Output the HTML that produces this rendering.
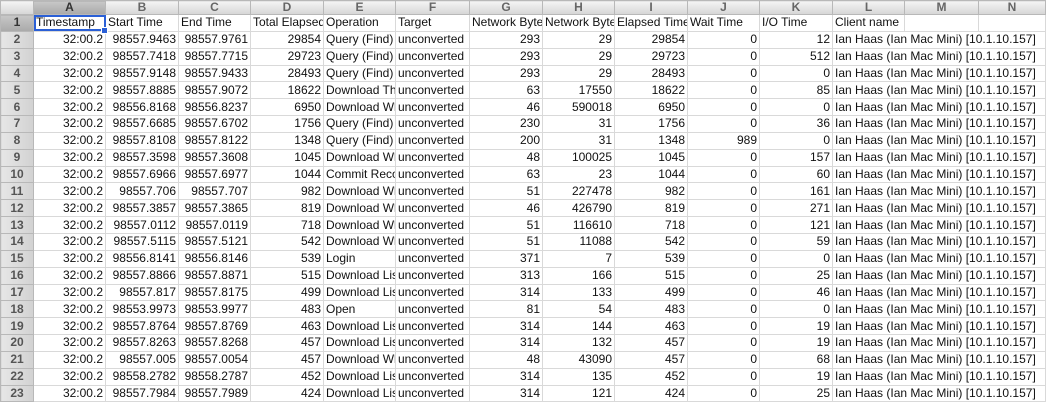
<!DOCTYPE html>
<html><head><meta charset="utf-8"><style>
html,body{margin:0;padding:0;background:#fff;width:1046px;height:404px;overflow:hidden}
table{border-collapse:collapse;table-layout:fixed;width:1045px;font-family:"Liberation Sans",sans-serif;font-size:12px;color:#111}
td{border:1px solid #d9d9d9;height:15.85px;padding:0 2px;white-space:nowrap;overflow:hidden;line-height:15px}
td.r{text-align:right}
tr.h td{background:linear-gradient(#f4f4f4,#d6d6d6);height:13px;line-height:13px;text-align:center;color:#666;font-weight:bold;font-size:12px;border-color:#b8b8b8}
td.rh{background:linear-gradient(90deg,#e6e6e6,#d2d2d2);text-align:center;color:#555;font-weight:bold;border-color:#b8b8b8;padding:0}
tr.h td.sel,td.rh.sel{background:linear-gradient(#c8c8c8,#a9a9a9);color:#333}
td.a1{outline:2px solid #2a5fd6;outline-offset:-2px;position:relative;overflow:visible}
td.a1:after{content:"";position:absolute;right:-3px;bottom:-3px;width:5px;height:5px;background:#2a5fd6;border:1px solid #fff}
</style></head><body>
<table>
<colgroup><col style="width:33px"><col style="width:72px"><col style="width:73px"><col style="width:72px"><col style="width:73px"><col style="width:72px"><col style="width:74px"><col style="width:73px"><col style="width:72px"><col style="width:73px"><col style="width:72px"><col style="width:73px"><col style="width:72px"><col style="width:74px"><col style="width:67px"></colgroup>
<tr class="h"><td style="background:linear-gradient(#f4f4f4,#d6d6d6)"></td><td class="sel">A</td><td>B</td><td>C</td><td>D</td><td>E</td><td>F</td><td>G</td><td>H</td><td>I</td><td>J</td><td>K</td><td>L</td><td>M</td><td>N</td></tr>
<tr><td class="rh sel">1</td><td class="a1">Timestamp</td><td>Start Time</td><td>End Time</td><td>Total Elapsed</td><td>Operation</td><td>Target</td><td>Network Bytes</td><td>Network Bytes</td><td>Elapsed Time</td><td>Wait Time</td><td>I/O Time</td><td>Client name</td><td></td><td></td></tr>
<tr><td class="rh">2</td><td class="r">32:00.2</td><td class="r">98557.9463</td><td class="r">98557.9761</td><td class="r">29854</td><td>Query (Find)</td><td>unconverted</td><td class="r">293</td><td class="r">29</td><td class="r">29854</td><td class="r">0</td><td class="r">12</td><td colspan="3">Ian Haas (Ian Mac Mini) [10.1.10.157]</td></tr>
<tr><td class="rh">3</td><td class="r">32:00.2</td><td class="r">98557.7418</td><td class="r">98557.7715</td><td class="r">29723</td><td>Query (Find)</td><td>unconverted</td><td class="r">293</td><td class="r">29</td><td class="r">29723</td><td class="r">0</td><td class="r">512</td><td colspan="3">Ian Haas (Ian Mac Mini) [10.1.10.157]</td></tr>
<tr><td class="rh">4</td><td class="r">32:00.2</td><td class="r">98557.9148</td><td class="r">98557.9433</td><td class="r">28493</td><td>Query (Find)</td><td>unconverted</td><td class="r">293</td><td class="r">29</td><td class="r">28493</td><td class="r">0</td><td class="r">0</td><td colspan="3">Ian Haas (Ian Mac Mini) [10.1.10.157]</td></tr>
<tr><td class="rh">5</td><td class="r">32:00.2</td><td class="r">98557.8885</td><td class="r">98557.9072</td><td class="r">18622</td><td>Download Thumbnail</td><td>unconverted</td><td class="r">63</td><td class="r">17550</td><td class="r">18622</td><td class="r">0</td><td class="r">85</td><td colspan="3">Ian Haas (Ian Mac Mini) [10.1.10.157]</td></tr>
<tr><td class="rh">6</td><td class="r">32:00.2</td><td class="r">98556.8168</td><td class="r">98556.8237</td><td class="r">6950</td><td>Download Whole</td><td>unconverted</td><td class="r">46</td><td class="r">590018</td><td class="r">6950</td><td class="r">0</td><td class="r">0</td><td colspan="3">Ian Haas (Ian Mac Mini) [10.1.10.157]</td></tr>
<tr><td class="rh">7</td><td class="r">32:00.2</td><td class="r">98557.6685</td><td class="r">98557.6702</td><td class="r">1756</td><td>Query (Find)</td><td>unconverted</td><td class="r">230</td><td class="r">31</td><td class="r">1756</td><td class="r">0</td><td class="r">36</td><td colspan="3">Ian Haas (Ian Mac Mini) [10.1.10.157]</td></tr>
<tr><td class="rh">8</td><td class="r">32:00.2</td><td class="r">98557.8108</td><td class="r">98557.8122</td><td class="r">1348</td><td>Query (Find)</td><td>unconverted</td><td class="r">200</td><td class="r">31</td><td class="r">1348</td><td class="r">989</td><td class="r">0</td><td colspan="3">Ian Haas (Ian Mac Mini) [10.1.10.157]</td></tr>
<tr><td class="rh">9</td><td class="r">32:00.2</td><td class="r">98557.3598</td><td class="r">98557.3608</td><td class="r">1045</td><td>Download Whole</td><td>unconverted</td><td class="r">48</td><td class="r">100025</td><td class="r">1045</td><td class="r">0</td><td class="r">157</td><td colspan="3">Ian Haas (Ian Mac Mini) [10.1.10.157]</td></tr>
<tr><td class="rh">10</td><td class="r">32:00.2</td><td class="r">98557.6966</td><td class="r">98557.6977</td><td class="r">1044</td><td>Commit Records</td><td>unconverted</td><td class="r">63</td><td class="r">23</td><td class="r">1044</td><td class="r">0</td><td class="r">60</td><td colspan="3">Ian Haas (Ian Mac Mini) [10.1.10.157]</td></tr>
<tr><td class="rh">11</td><td class="r">32:00.2</td><td class="r">98557.706</td><td class="r">98557.707</td><td class="r">982</td><td>Download Whole</td><td>unconverted</td><td class="r">51</td><td class="r">227478</td><td class="r">982</td><td class="r">0</td><td class="r">161</td><td colspan="3">Ian Haas (Ian Mac Mini) [10.1.10.157]</td></tr>
<tr><td class="rh">12</td><td class="r">32:00.2</td><td class="r">98557.3857</td><td class="r">98557.3865</td><td class="r">819</td><td>Download Whole</td><td>unconverted</td><td class="r">46</td><td class="r">426790</td><td class="r">819</td><td class="r">0</td><td class="r">271</td><td colspan="3">Ian Haas (Ian Mac Mini) [10.1.10.157]</td></tr>
<tr><td class="rh">13</td><td class="r">32:00.2</td><td class="r">98557.0112</td><td class="r">98557.0119</td><td class="r">718</td><td>Download Whole</td><td>unconverted</td><td class="r">51</td><td class="r">116610</td><td class="r">718</td><td class="r">0</td><td class="r">121</td><td colspan="3">Ian Haas (Ian Mac Mini) [10.1.10.157]</td></tr>
<tr><td class="rh">14</td><td class="r">32:00.2</td><td class="r">98557.5115</td><td class="r">98557.5121</td><td class="r">542</td><td>Download Whole</td><td>unconverted</td><td class="r">51</td><td class="r">11088</td><td class="r">542</td><td class="r">0</td><td class="r">59</td><td colspan="3">Ian Haas (Ian Mac Mini) [10.1.10.157]</td></tr>
<tr><td class="rh">15</td><td class="r">32:00.2</td><td class="r">98556.8141</td><td class="r">98556.8146</td><td class="r">539</td><td>Login</td><td>unconverted</td><td class="r">371</td><td class="r">7</td><td class="r">539</td><td class="r">0</td><td class="r">0</td><td colspan="3">Ian Haas (Ian Mac Mini) [10.1.10.157]</td></tr>
<tr><td class="rh">16</td><td class="r">32:00.2</td><td class="r">98557.8866</td><td class="r">98557.8871</td><td class="r">515</td><td>Download List</td><td>unconverted</td><td class="r">313</td><td class="r">166</td><td class="r">515</td><td class="r">0</td><td class="r">25</td><td colspan="3">Ian Haas (Ian Mac Mini) [10.1.10.157]</td></tr>
<tr><td class="rh">17</td><td class="r">32:00.2</td><td class="r">98557.817</td><td class="r">98557.8175</td><td class="r">499</td><td>Download List</td><td>unconverted</td><td class="r">314</td><td class="r">133</td><td class="r">499</td><td class="r">0</td><td class="r">46</td><td colspan="3">Ian Haas (Ian Mac Mini) [10.1.10.157]</td></tr>
<tr><td class="rh">18</td><td class="r">32:00.2</td><td class="r">98553.9973</td><td class="r">98553.9977</td><td class="r">483</td><td>Open</td><td>unconverted</td><td class="r">81</td><td class="r">54</td><td class="r">483</td><td class="r">0</td><td class="r">0</td><td colspan="3">Ian Haas (Ian Mac Mini) [10.1.10.157]</td></tr>
<tr><td class="rh">19</td><td class="r">32:00.2</td><td class="r">98557.8764</td><td class="r">98557.8769</td><td class="r">463</td><td>Download List</td><td>unconverted</td><td class="r">314</td><td class="r">144</td><td class="r">463</td><td class="r">0</td><td class="r">19</td><td colspan="3">Ian Haas (Ian Mac Mini) [10.1.10.157]</td></tr>
<tr><td class="rh">20</td><td class="r">32:00.2</td><td class="r">98557.8263</td><td class="r">98557.8268</td><td class="r">457</td><td>Download List</td><td>unconverted</td><td class="r">314</td><td class="r">132</td><td class="r">457</td><td class="r">0</td><td class="r">19</td><td colspan="3">Ian Haas (Ian Mac Mini) [10.1.10.157]</td></tr>
<tr><td class="rh">21</td><td class="r">32:00.2</td><td class="r">98557.005</td><td class="r">98557.0054</td><td class="r">457</td><td>Download Whole</td><td>unconverted</td><td class="r">48</td><td class="r">43090</td><td class="r">457</td><td class="r">0</td><td class="r">68</td><td colspan="3">Ian Haas (Ian Mac Mini) [10.1.10.157]</td></tr>
<tr><td class="rh">22</td><td class="r">32:00.2</td><td class="r">98558.2782</td><td class="r">98558.2787</td><td class="r">452</td><td>Download List</td><td>unconverted</td><td class="r">314</td><td class="r">135</td><td class="r">452</td><td class="r">0</td><td class="r">19</td><td colspan="3">Ian Haas (Ian Mac Mini) [10.1.10.157]</td></tr>
<tr><td class="rh">23</td><td class="r">32:00.2</td><td class="r">98557.7984</td><td class="r">98557.7989</td><td class="r">424</td><td>Download List</td><td>unconverted</td><td class="r">314</td><td class="r">121</td><td class="r">424</td><td class="r">0</td><td class="r">25</td><td colspan="3">Ian Haas (Ian Mac Mini) [10.1.10.157]</td></tr>
</table>
</body></html>
